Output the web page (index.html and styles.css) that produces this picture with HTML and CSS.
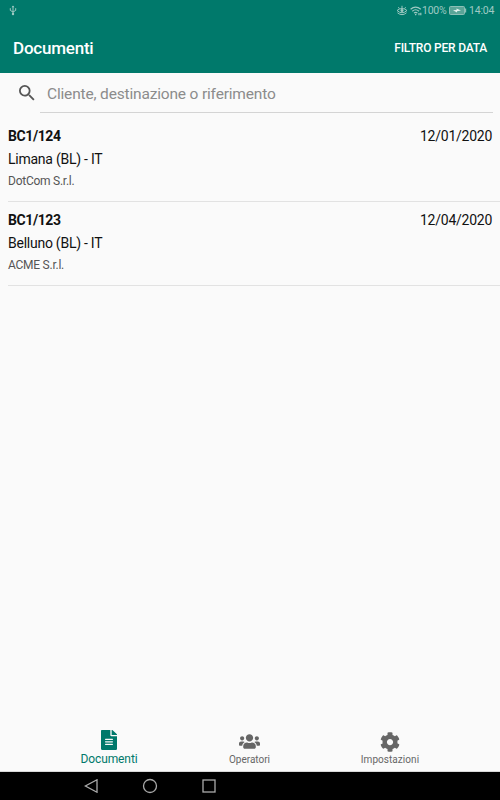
FILE: index.html
```html
<!DOCTYPE html>
<html lang="it">
<head>
<meta charset="utf-8">
<title>Documenti</title>
<link rel="stylesheet" href="styles.css">
</head>
<body>
<header class="top">
  <div class="status">
    <svg class="usb" width="8" height="11" viewBox="0 0 8 11" fill="none" stroke="currentColor"><path d="M4 1v8M1.300 3.200v2.200L4 7l2.700-1.600V3.200"/><path d="M2.600 2.300 4 .5l1.400 1.800z" fill="currentColor" stroke="none"/><circle cx="4" cy="9" r="1.200" fill="currentColor" stroke="none"/></svg>
    <svg class="eye" width="12" height="11" viewBox="0 0 12 11" fill="none" stroke="currentColor"><path d="M1 5.500Q6 1.500 11 5.500Q6 10 1 5.500zM6 3.200V.8M3.400 3.700 2.400 2.200M8.600 3.700l1-1.500"/><circle cx="6" cy="5.500" r="1.100" fill="currentColor"/><path d="M1.500 7.800Q6 11.500 10.500 7.800"/></svg>
    <svg class="wifi" width="12" height="10" viewBox="0 0 12 10" fill="none" stroke="currentColor" stroke-width="1.200"><path d="M.6 3.300Q5.500-1.200 10.800 3.300M2.300 5.200Q5.600 2.300 9 5.200M4 7.100Q5.700 5.600 7.400 7.100"/><circle cx="5.700" cy="8.600" r=".8" fill="currentColor" stroke="none"/><path d="M9 9.200V7M10.800 6.800V9.200"/></svg>
    <span class="percent">100%</span>
    <svg class="battery" width="18" height="9" viewBox="0 0 18 9"><rect x=".5" y=".5" width="15" height="8" rx="1" fill="#5aa598" stroke="#8cbfb6"/><path d="M16.500 2.500v4" stroke="#8cbfb6" stroke-width="1.400"/><path d="M4 4.300 7.500 3.900V2.500l4.500 2-4 .7v1.300z" fill="#e4f2ef"/></svg>
    <span class="clock">14:04</span>
  </div>
  <div class="bar"><h1>Documenti</h1><span class="filter">FILTRO PER DATA</span></div>
</header>
<main>
  <div class="search">
    <svg width="16" height="16" viewBox="3 3 18 18" fill="#555"><path d="M15.500 14h-.79l-.28-.27A6.471 6.471 0 0 0 16 9.500 6.500 6.500 0 1 0 9.500 16c1.610 0 3.090-.59 4.230-1.570l.27.28v.79l5 4.990L20.490 19l-4.990-5zm-6 0C7.010 14 5 11.990 5 9.500S7.010 5 9.500 5 14 7.010 14 9.500 11.990 14 9.500 14z"/></svg>
    <div class="field"><span>Cliente, destinazione o riferimento</span></div>
  </div>
  <section class="row">
    <div class="line"><b>BC1/124</b><span class="date">12/01/2020</span></div>
    <div class="place"><span>Limana (BL) - IT</span></div>
    <div class="company"><span>DotCom S.r.l.</span></div>
  </section>
  <section class="row">
    <div class="line"><b>BC1/123</b><span class="date">12/04/2020</span></div>
    <div class="place"><span>Belluno (BL) - IT</span></div>
    <div class="company"><span>ACME S.r.l.</span></div>
  </section>
</main>
<nav class="tabs">
  <div class="tab active">
    <svg width="16" height="20" viewBox="0 0 384 512" preserveAspectRatio="none" fill="currentColor"><path d="M224 136V0H24C10.700 0 0 10.700 0 24v464c0 13.300 10.700 24 24 24h336c13.300 0 24-10.700 24-24V160H248c-13.200 0-24-10.800-24-24zm64 236c0 6.600-5.400 12-12 12H108c-6.600 0-12-5.400-12-12v-8c0-6.600 5.400-12 12-12h168c6.600 0 12 5.400 12 12v8zm0-64c0 6.600-5.400 12-12 12H108c-6.600 0-12-5.400-12-12v-8c0-6.600 5.400-12 12-12h168c6.600 0 12 5.400 12 12v8zm0-72v8c0 6.600-5.400 12-12 12H108c-6.600 0-12-5.400-12-12v-8c0-6.600 5.400-12 12-12h168c6.600 0 12 5.400 12 12zm96-114.100v6.100H256V0h6.100c6.400 0 12.500 2.500 17 7l97.900 98c4.500 4.500 7 10.600 7 16.900z"/></svg>
    <span>Documenti</span>
  </div>
  <div class="tab">
    <svg class="users" width="21" height="17" viewBox="0 0 640 512" fill="currentColor"><path d="M96 224c35.300 0 64-28.700 64-64s-28.700-64-64-64-64 28.700-64 64 28.700 64 64 64zm448 0c35.300 0 64-28.700 64-64s-28.700-64-64-64-64 28.700-64 64 28.700 64 64 64zm32 32h-64c-17.600 0-33.500 7.100-45.100 18.600 40.300 22.100 68.900 62 75.100 109.400h66c17.700 0 32-14.300 32-32v-32c0-35.300-28.700-64-64-64zm-256 0c61.900 0 112-50.100 112-112S381.900 32 320 32 208 82.100 208 144s50.100 112 112 112zm76.800 32h-8.300c-20.800 10-43.900 16-68.500 16s-47.600-6-68.500-16h-8.300C179.600 288 128 339.600 128 403.200V432c0 26.500 21.500 48 48 48h288c26.500 0 48-21.500 48-48v-28.800c0-63.600-51.600-115.200-115.200-115.200zm-223.700-13.400C161.500 263.100 145.600 256 128 256H64c-35.300 0-64 28.700-64 64v32c0 17.700 14.300 32 32 32h65.900c6.300-47.400 34.900-87.300 75.200-109.400z"/></svg>
    <span>Operatori</span>
  </div>
  <div class="tab">
    <svg class="gear" width="20" height="20" viewBox="0 0 512 512" fill="currentColor"><path d="M487.400 315.700l-42.600-24.600c4.300-23.200 4.300-47 0-70.200l42.600-24.600c4.900-2.800 7.100-8.600 5.500-14-11.100-35.600-30-67.800-54.700-94.600-3.800-4.100-10-5.100-14.800-2.300L380.800 110c-17.900-15.400-38.500-27.300-60.800-35.100V25.800c0-5.600-3.900-10.500-9.400-11.700-36.700-8.200-74.300-7.800-109.200 0-5.500 1.200-9.400 6.100-9.400 11.700V75c-22.200 7.900-42.800 19.800-60.800 35.100L88.700 85.500c-4.900-2.800-11-1.900-14.800 2.300-24.700 26.700-43.600 58.900-54.700 94.600-1.700 5.400.6 11.200 5.500 14L67.300 221c-4.300 23.200-4.300 47 0 70.200l-42.600 24.600c-4.900 2.800-7.100 8.600-5.500 14 11.100 35.600 30 67.800 54.700 94.600 3.800 4.100 10 5.100 14.800 2.300l42.600-24.600c17.900 15.400 38.500 27.300 60.800 35.100v49.200c0 5.600 3.900 10.500 9.400 11.700 36.700 8.200 74.300 7.800 109.200 0 5.500-1.200 9.400-6.100 9.400-11.700v-49.200c22.200-7.900 42.800-19.800 60.800-35.100l42.600 24.600c4.900 2.800 11 1.900 14.800-2.300 24.700-26.700 43.600-58.900 54.700-94.600 1.500-5.500-.7-11.300-5.600-14.100zM256 336c-44.100 0-80-35.900-80-80s35.900-80 80-80 80 35.900 80 80-35.900 80-80 80z"/></svg>
    <span class="settings">Impostazioni</span>
  </div>
</nav>
<footer class="system">
  <svg width="14" height="14" viewBox="0 0 14 14"><path d="M13 .8v12.400L1.400 7z"/></svg>
  <svg width="16" height="16" viewBox="0 0 16 16"><circle cx="8" cy="8" r="6.500"/></svg>
  <svg width="14" height="14" viewBox="0 0 14 14"><rect x="1" y="1" width="12" height="12"/></svg>
</footer>
</body>
</html>
```
FILE: styles.css
```css
* { box-sizing: border-box; }
body {
  margin: 0;
  width: 500px;
  height: 800px;
  display: flex;
  flex-direction: column;
  background: #fafafa;
  color: #111;
  font-family: Roboto, "Liberation Sans", sans-serif;
  overflow: hidden;
}
svg { display: block; flex: none; }
.top { height: 73px; background: #00796b; color: #fff; }
.status {
  height: 21px;
  display: flex;
  align-items: center;
  padding: 0 6px 0 9px;
  color: #9fcac3;
  font-size: 10.5px;
}
.eye { margin-left: auto; }
.wifi { margin-left: 2px; }
.percent { width: 24px; white-space: nowrap; letter-spacing: -.25px; }
.battery { margin: 0 2px 0 3px; }
.clock { width: 25px; white-space: nowrap; letter-spacing: -.2px; }
.bar {
  height: 53px;
  display: flex;
  align-items: center;
  justify-content: space-between;
  padding: 0 13px;
}
h1 { margin: 0; font-size: 17px; font-weight: 500; letter-spacing: -.22px; }
.filter { font-size: 12px; font-weight: 500; letter-spacing: -.2px; }
main { flex: 1; }
.search {
  height: 40px;
  display: flex;
  align-items: center;
  padding: 0 7px 0 19px;
}
.field {
  flex: 1;
  height: 40px;
  margin-left: 5px;
  padding-left: 7px;
  line-height: 42px;
  border-bottom: 1px solid #d4d4d4;
  color: #8c8c8c;
  font-size: 15.5px;
  letter-spacing: -.17px;
}
.row {
  height: 84px;
  margin-left: 8px;
  padding: 7px 8px 0 0;
  border-bottom: 1px solid #e2e2e2;
}
.row:nth-of-type(1) { height: 89px; padding-top: 12px; }
.line, .place { height: 23px; line-height: 22px; font-size: 14px; letter-spacing: -.25px; }
.line { display: flex; justify-content: space-between; }
.line b { font-weight: 700; letter-spacing: -.4px; }
.company { height: 21px; line-height: 21px; font-size: 12px; letter-spacing: -.25px; color: #555; }
.tabs { height: 47px; display: flex; justify-content: center; padding-right: 1px; border-bottom: 1px solid #d8d8d8; }
.tab {
  width: 140.500px;
  display: flex;
  flex-direction: column;
  align-items: center;
  color: #666;
  font-size: 10px;
}
.tab span { line-height: 14px; margin-top: 1px; }
.tab.active { color: #00796b; font-size: 12px; letter-spacing: -.1px; }
.tab.active svg { margin-top: 5px; }
.tab.active span { margin-top: 2px; }
.users { margin: 8px 0 2px; }
.gear { margin-top: 7px; }
.settings { letter-spacing: .05px; }
.system {
  height: 28px;
  display: flex;
  align-items: center;
  gap: 44px;
  padding-left: 84px;
  background: #000;
}
.system svg { fill: none; stroke: #aaa; stroke-width: 1.3; }
```
